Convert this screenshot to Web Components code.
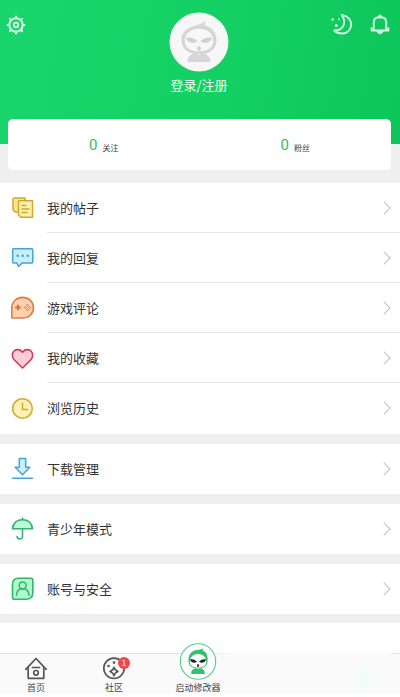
<!DOCTYPE html>
<html lang="zh-CN">
<head>
<meta charset="utf-8">
<meta name="viewport" content="width=device-width, initial-scale=1">
<title>我的</title>
<style>
body { margin: 0; font-family: "Noto Sans CJK SC", "Noto Sans", sans-serif; color: #333; background: #efefef; }
</style>
</head>
<body>
<profile-page></profile-page>
<script>
const define = (name, html, setup) => {
  const tpl = document.createElement('template');
  tpl.innerHTML = html;
  customElements.define(name, class extends HTMLElement {
    constructor() {
      super();
      this.attachShadow({ mode: 'open' }).append(tpl.content.cloneNode(true));
    }
    connectedCallback() { if (setup) setup(this, this.shadowRoot); }
  });
};

const ICONS = {
  gear: ['0 0 20 20', `<g fill="none" stroke="#d5fbe3"><circle cx="10" cy="10" r="6.7" stroke-width="2"/><circle cx="10" cy="10" r="2.3" stroke-width="1.8"/><path stroke-width="2.2" stroke-linecap="round" d="M10 1.6v1.2M10 17.2v1.2M1.6 10h1.2M17.2 10h1.2M4 4l.9.9M15.1 15.1l.9.9M4 16l.9-.9M15.1 4.9l.9-.9"/></g>`],
  moon: ['0 0 24 24', `<path d="M11.700 2.900C17.800 3.700 21.200 8 21.200 12.500 21 18 17 21.500 12.500 21.500 9 21.500 6 20.500 4.200 18.500 13.500 18.500 17 10.500 11.700 2.900z" fill="none" stroke="#d5fbe3" stroke-width="1.900" stroke-linejoin="round"/><g fill="#d5fbe3"><circle cx="2.700" cy="7.500" r="1.200"/><circle cx="9" cy="7.300" r="1"/><circle cx="6.300" cy="13.500" r="1.500"/></g>`],
  bell: ['-1.5 -2 25 25', `<g fill="none" stroke="#d5fbe3" stroke-width="2" stroke-linecap="round" stroke-linejoin="round"><path d="M4.500 15.500V9c0-3.500 2-5.500 5.500-5.500h2c3.500 0 5.500 2 5.500 5.500v6.500M2.300 15v2.300h17.400V15"/></g><path d="M7.500 17.800h7c-.5 2.300-2 3.400-3.500 3.400s-3-1.100-3.500-3.400z" fill="#d5fbe3"/><circle cx="11" cy="2.700" r="2" fill="#d5fbe3"/>`],
  posts: ['0 0 24 24', `<g stroke="#d3a72b" stroke-width="1.500" stroke-linejoin="round" stroke-linecap="round"><path d="M3 2h11v14H4.200L2 14V3z" fill="#ffe58d"/><path d="M8 4.700h13.500v16.500H10l-2.500-2.500V5.200z" fill="#fff2ae"/><path fill="none" d="M11 9.500h4M11 13h7M11 16.500h5"/></g>`],
  reply: ['0 0 24 24', `<path d="M2.500 2.700h18.200c.7 0 1.100.4 1.100 1.100v12c0 .7-.4 1.100-1.100 1.100h-9.400L7.500 20.500 5.800 17H2.800c-.7 0-1.100-.4-1.100-1.100v-12c0-.7.2-1.200.8-1.200z" fill="#c8eeff" stroke="#45a4d3" stroke-width="1.500" stroke-linejoin="round"/><g fill="#3d9fcd"><circle cx="6.700" cy="9.800" r="1.200"/><circle cx="11.700" cy="9.800" r="1.200"/><circle cx="16.700" cy="9.800" r="1.200"/></g>`],
  game: ['0 0 24 24', `<path d="M.8 22V12C.8 5.500 5.700 1.400 11.800 1.400S22.500 6 22.500 11.700 18 22 12 22z" fill="#ffd0b0" stroke="#db7f4d" stroke-width="1.600" stroke-linejoin="round"/><path d="M7 8.700v5.600M4.200 11.500h5.600" stroke="#db7338" stroke-width="2"/><g fill="none" stroke="#db7f4d" stroke-width=".9"><circle cx="16.500" cy="9.300" r=".9"/><circle cx="16.500" cy="13.700" r=".9"/><circle cx="14.300" cy="11.500" r=".9"/><circle cx="18.700" cy="11.500" r=".9"/></g>`],
  heart: ['0 0 24 24', `<path d="M11.500 22L3 13.500C.9 11.300.8 7.500 2.800 5.300c2.400-2.600 6.300-2.100 8.700.9 2.400-3 6.300-3.500 8.700-.9 2 2.200 1.900 6-.2 8.200z" fill="#ffccd5" stroke="#c93e5a" stroke-width="1.600" stroke-linejoin="round"/>`],
  clock: ['0 0 24 24', `<circle cx="11.500" cy="12.500" r="9.800" fill="#fff2b4" stroke="#d3ab3a" stroke-width="1.600"/><path d="M11.500 6.800v6.700h5.700" fill="none" stroke="#d3a72b" stroke-width="1.500"/>`],
  download: ['0 0 24 24', `<path d="M8.300 1.500h6.400v8.800h4.100L11.500 17.700l-7.300-7.400h4.100z" fill="#c8eeff" stroke="#45a4d3" stroke-width="1.500" stroke-linejoin="round"/><path d="M1.700 21.300h19.800" stroke="#45a4d3" stroke-width="1.500" stroke-linecap="round"/>`],
  umbrella: ['0 0 24 24', `<path d="M1.500 11.800C2.200 5.800 6 2.700 11.500 2.700s9.300 3.100 10 9.100z" fill="#b8ffd3" stroke="#32b469" stroke-width="1.600" stroke-linejoin="round"/><path d="M11.500 1v1.500M11.500 12v7.500c0 3.400-5.300 3.300-5.400 0" fill="none" stroke="#32b469" stroke-width="1.600" stroke-linecap="round"/>`],
  account: ['0 0 24 24', `<path d="M7.500 1.200h12.300c1.400 0 2 .6 2 2v12.300c0 4.500-2.400 6.800-6.800 6.800H3.500c-1.400 0-2-.6-2-2V7.500c0-4 2-6.300 6-6.300z" fill="#aefbcb" stroke="#32b469" stroke-width="1.600"/><g fill="none" stroke="#32b469" stroke-width="1.500" stroke-linecap="round"><circle cx="11.700" cy="8.400" r="3.500"/><path d="M5.500 18.300c.1-4.200 2.500-6.500 6.200-6.500s6.100 2.300 6.200 6.500"/></g>`],
  home: ['0 0 24 24', `<g fill="none" stroke="#555" stroke-width="1.700" stroke-linejoin="round" stroke-linecap="round"><path d="M1.800 12.300L12 1.500l10.200 10.800M4.200 10.500v10.800h15.600V10.500"/><path d="M8.300 10.500h7.400" stroke-width="1.500"/><circle cx="12" cy="15.800" r="2.300"/></g>`],
  community: ['0 0 24 24', `<circle cx="12" cy="11.300" r="10.200" fill="none" stroke="#555" stroke-width="1.700"/><path d="M12 10.300c.8 2.800 1.500 3.500 4 4.300-2.500.8-3.200 1.500-4 4.300-.8-2.800-1.500-3.500-4-4.300 2.500-.8 3.200-1.500 4-4.300z" fill="none" stroke="#555" stroke-width="1.600" stroke-linejoin="round"/><g fill="#555"><circle cx="6.500" cy="9" r="1.300"/><circle cx="12" cy="5.600" r="1.300"/></g>`],
  chevron: ['0 0 8 14', `<path d="M.8.700L7 7 .8 13.300" fill="none" stroke="#c4c4c4" stroke-width="1.100"/>`],
  avatar: ['0 0 60 60', `<circle cx="30" cy="30" r="29.500" fill="#f7f7f7"/><path d="M12.500 29C12 18 22 14.500 28 13.300 32 12 33 10.500 37 9.200c-1 1.600-1.200 2.600-1.500 4.300C43 15 48 21 47.500 29 47 38 39.500 42.200 30 42.200S13 38 12.500 29zm3.300.5c.4 6.800 6.200 9.900 14.200 9.900s13.800-3.100 14.200-9.900C44.600 21 38 16.800 30 16.800S15.400 21 15.800 29.500z" fill="#d5d5d5" fill-rule="evenodd"/><path d="M17 25.800c3.500-1 8 0 11.500 3.200-3.500 3.200-10.500 2.300-11.500-3.200zM43 25.800c-3.500-1-8 0-11.500 3.200 3.500 3.200 10.500 2.300 11.500-3.200z" fill="#d0d0d0"/><ellipse cx="30" cy="36.500" rx="1.800" ry="2.500" fill="#d0d0d0"/><path d="M18.500 50c0-5.500 3.500-8 7.500-8.500 2.500 1.500 5.500 1.500 8 0 4 .5 7.500 3 7.500 8.500z" fill="#d5d5d5"/>`],
  mascot: ['0 0 38 38', `<circle cx="19" cy="18.500" r="17.700" fill="#fff" stroke="#54cf8a" stroke-width="1.100"/><path d="M9.600 19.500C8.500 11 13 7.700 18 7.100c2.400-.3 4-1.300 6.500-1.700-.6.800-.9 1.500-.9 2.200C27.500 9 29.500 13.500 28.400 19.500c-.9 4.500-5 6-9.400 6s-8.500-1.500-9.400-6z" fill="#35c06d"/><path d="M10.800 18.500c0-4.500 3.500-7.500 8.200-7.500s8.200 3 8.200 7.500-3.200 6-8.200 6-8.200-1.500-8.200-6z" fill="#fff"/><path d="M11 16.300c3-.4 5 .3 7 2.400-2.500 1.800-6.500 1-7-2.400zM27 16.300c-3-.4-5 .3-7 2.400 2.500 1.800 6.500 1 7-2.400z" fill="#222"/><ellipse cx="19" cy="22.500" rx="1" ry="1.500" fill="#222"/><path d="M12.200 31c-.2-3.300 1.300-5.200 4-5.700 1.800.9 3.800.9 5.600 0 2.700.5 4.200 2.400 4 5.700z" fill="#35c06d"/>`]
};

define('app-icon', `<style>:host{display:block;flex:none}svg{display:block;width:100%;height:100%}</style>`, (el, root) => {
  if (root.querySelector('svg')) return;
  const [box, art] = ICONS[el.getAttribute('name')];
  root.innerHTML += `<svg viewBox="${box}" aria-hidden="true">${art}</svg>`;
});

define('profile-header', `
<style>
:host{display:block;height:144px;box-sizing:border-box;padding:12px 8px 0 6px;background:linear-gradient(100deg,#1ad56c,#14cf63 55%,#0dc65b);color:#fff}
.bar{display:grid;grid-template-columns:1fr auto 1fr;align-items:start}
button,a{font:inherit;color:inherit;background:none;border:0;padding:0;margin:0;text-decoration:none;cursor:pointer}
.gear{width:24px;height:26px;display:grid;place-items:center start}
.gear app-icon{width:20px;height:20px}
.tools{display:flex;justify-content:flex-end;gap:14px}
.tools app-icon{width:24px;height:24px}
.me{display:flex;flex-direction:column;align-items:center;gap:3px;font-size:13px;line-height:20px;color:#effff5}
.me app-icon{width:60px;height:60px}
</style>
<div class="bar">
<button class="gear" aria-label="设置"><app-icon name="gear"></app-icon></button>
<a class="me" href="#login"><app-icon name="avatar"></app-icon><span>登录/注册</span></a>
<div class="tools"><button aria-label="夜间模式"><app-icon name="moon"></app-icon></button><button aria-label="通知"><app-icon name="bell"></app-icon></button></div>
</div>`);

define('stat-card', `<style>
:host{display:grid;grid-template-columns:1fr 1fr;position:relative;margin:-25px 9px 13px 8px;height:51px;background:#fff;border-radius:5px}
</style><slot></slot>`);

define('stat-item', `<style>
:host{display:flex}
a{flex:1;display:flex;align-items:flex-end;justify-content:center;gap:5px;padding-bottom:15px;color:#444;text-decoration:none;font-size:8px;line-height:14px}
b{font:15px/20px Roboto,sans-serif;color:#35b86d}
</style><a href="#stat"><b><slot name="value"></slot></b><span><slot></slot></span></a>`);

define('menu-group', `<style>
:host{display:block;background:#fff;margin-bottom:10px}
:host([tall]){padding-bottom:1px}
</style><slot></slot>`);

define('menu-row', `<style>
:host{display:block}
a{display:flex;align-items:center;gap:12px;height:50px;padding-left:11px;color:#333;text-decoration:none}
.ico app-icon{width:24px;height:24px}
.main{flex:1;align-self:stretch;box-sizing:border-box;display:flex;align-items:center;justify-content:space-between;padding-right:9px;font-size:13px;border-bottom:1px solid transparent}
:host([line]) .main{border-color:#e6e6e6}
.chev{width:8px;height:14px}
</style><a href="#item"><span class="ico"></span><span class="main"><slot></slot><app-icon class="chev" name="chevron"></app-icon></span></a>`,
(el, root) => {
  root.querySelector('.ico').innerHTML = `<app-icon name="${el.getAttribute('icon')}"></app-icon>`;
});

define('tab-item', `<style>
:host{display:flex;justify-content:center}
a{display:flex;flex-direction:column;align-items:center;color:#444;text-decoration:none;font-size:9px;line-height:13px}
.pic{position:relative}
::slotted(app-icon){width:24px;height:24px}
:host([large]) ::slotted(app-icon){width:38px;height:38px}
::slotted([slot=badge]){position:absolute;top:0;right:-4px;width:12px;height:12px;border-radius:50%;background:#f0464f;color:#fff;font-size:8px;line-height:12px;text-align:center}
</style><a href="#tab"><span class="pic"><slot name="icon"></slot><slot name="badge"></slot></span><span><slot></slot></span></a>`);

define('tab-bar', `<style>
:host{display:block;position:sticky;bottom:0}
nav{height:44px;box-sizing:border-box;display:grid;grid-template:100% / 18fr 21fr 21fr 40fr;align-items:end;padding-bottom:3px;
background:linear-gradient(90deg,#e2e2e2,#e2e2e2 50%,transparent 58%,transparent 97%,#e4e4e4 99%) top/100% 1px no-repeat,radial-gradient(ellipse 14px 20px at 91% 55%,#f1fcf9,transparent) no-repeat,linear-gradient(#fafafa 0 41px,#fff 41px)}
</style><nav aria-label="主导航"><slot></slot></nav>`);

define('profile-page', `<style>
:host{display:flex;flex-direction:column;min-height:100vh}
.rest{flex:1;min-height:30px;background:#fff;margin-top:-1px}
</style>
<profile-header></profile-header>
<stat-card>
<stat-item><span slot="value">0</span>关注</stat-item>
<stat-item><span slot="value">0</span>粉丝</stat-item>
</stat-card>
<menu-group tall>
<menu-row icon="posts" line>我的帖子</menu-row>
<menu-row icon="reply" line>我的回复</menu-row>
<menu-row icon="game" line>游戏评论</menu-row>
<menu-row icon="heart" line>我的收藏</menu-row>
<menu-row icon="clock">浏览历史</menu-row>
</menu-group>
<menu-group><menu-row icon="download">下载管理</menu-row></menu-group>
<menu-group><menu-row icon="umbrella">青少年模式</menu-row></menu-group>
<menu-group><menu-row icon="account">账号与安全</menu-row></menu-group>
<div class="rest"></div>
<tab-bar>
<tab-item><app-icon slot="icon" name="home"></app-icon>首页</tab-item>
<tab-item><app-icon slot="icon" name="community"></app-icon><span slot="badge">1</span>社区</tab-item>
<tab-item large><app-icon slot="icon" name="mascot"></app-icon>启动修改器</tab-item>
</tab-bar>`);
</script>
</body>
</html>
